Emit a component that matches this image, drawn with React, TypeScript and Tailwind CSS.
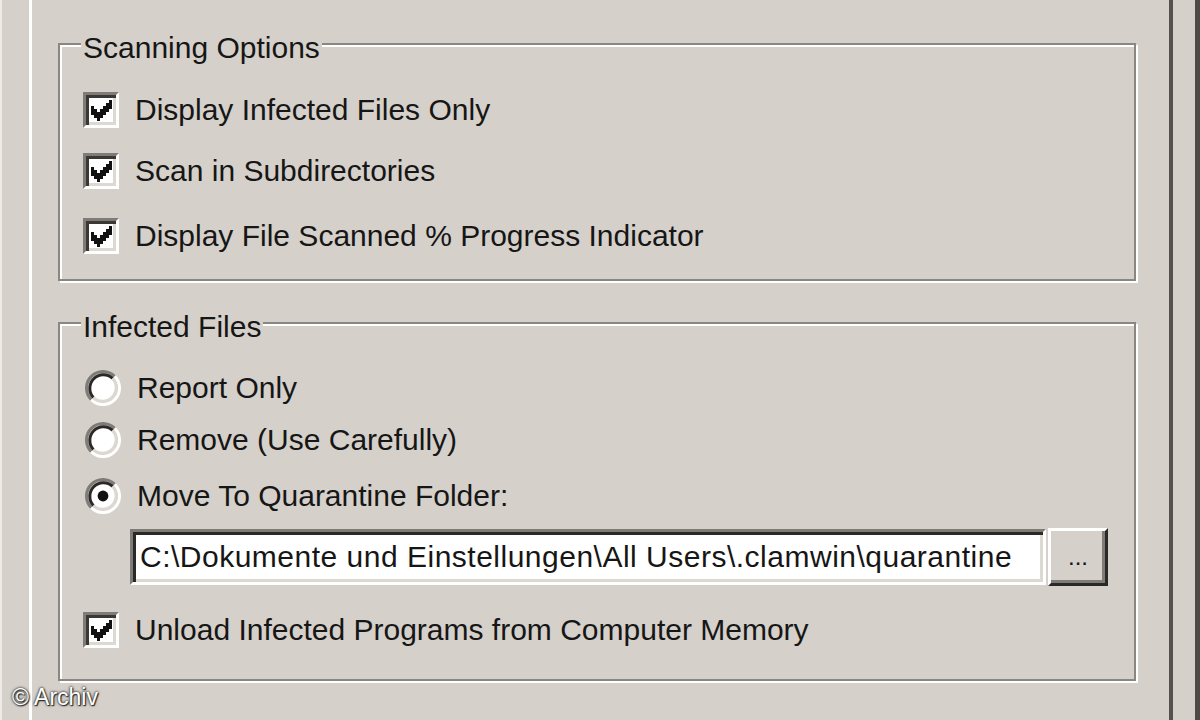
const checkRuns = [2, 3, 4, 3, 2, 1, 0];

const CheckMark = () => (
  <svg width="21" height="21" viewBox="0 0 7 7" shapeRendering="crispEdges">
    {checkRuns.map((row, col) => (
      <rect key={col} x={col} y={row} width="1" height="3" fill="#111" />
    ))}
  </svg>
);

const Checkbox = ({ checked }: { checked?: boolean }) => (
  <div className="flex h-[36px] w-[36px] shrink-0 items-center justify-center border-[3px] border-t-[#7f7b77] border-l-[#7f7b77] border-r-white border-b-white bg-white shadow-[inset_3px_3px_0_#3a3735,inset_-3px_-3px_0_#dcd8d2]">
    {checked && <CheckMark />}
  </div>
);

const Radio = ({ checked }: { checked?: boolean }) => (
  <svg width="36" height="36" viewBox="0 0 12 12" className="shrink-0">
    <circle cx="6" cy="6" r="4.5" fill="#fff" />
    <path d="M2.11 9.89 A5.5 5.5 0 0 1 9.89 2.11" fill="none" stroke="#7f7b77" strokeWidth="1" />
    <path d="M9.89 2.11 A5.5 5.5 0 0 1 2.11 9.89" fill="none" stroke="#fff" strokeWidth="1" />
    <path d="M2.82 9.18 A4.5 4.5 0 0 1 9.18 2.82" fill="none" stroke="#2b2927" strokeWidth="1" />
    <path d="M9.18 2.82 A4.5 4.5 0 0 1 2.82 9.18" fill="none" stroke="#dcd8d2" strokeWidth="1" />
    {checked && <circle cx="6" cy="6" r="1.8" fill="#111" />}
  </svg>
);

const Label = ({ children }: { children: React.ReactNode }) => (
  <span className="text-[30px] leading-[30px] text-[#161616]">{children}</span>
);

const CheckRow = ({ label, className = "" }: { label: string; className?: string }) => (
  <div className={`flex items-center gap-[16px] ${className}`}>
    <Checkbox checked />
    <Label>{label}</Label>
  </div>
);

const RadioRow = ({
  label,
  checked,
  className = "",
}: {
  label: string;
  checked?: boolean;
  className?: string;
}) => (
  <div className={`flex items-center gap-[16px] ${className}`}>
    <Radio checked={checked} />
    <Label>{label}</Label>
  </div>
);

const GroupBox = ({
  title,
  className = "",
  children,
}: {
  title: string;
  className?: string;
  children: React.ReactNode;
}) => (
  <div
    className={`relative w-[1078px] border-2 border-[#8a8682] shadow-[inset_2px_2px_0_#fff,2px_2px_0_#fff] ${className}`}
  >
    <span className="absolute left-[21px] top-[-12px] bg-[#d5d0ca] px-[2px] text-[30px] leading-[30px] text-[#161616]">
      {title}
    </span>
    {children}
  </div>
);

export default function App() {
  return (
    <div
      className="relative flex h-[720px] w-[1200px] overflow-hidden bg-[#d5d0ca]"
      style={{ fontFamily: '"Liberation Sans", Arial, sans-serif' }}
    >
      <div className="w-[29px] shrink-0 border-l-2 border-[#eeebe6]" />

      <div className="w-[1144px] shrink-0 border-l-[3px] border-r-[4px] border-l-white border-r-[#56514e] pl-[26px] pt-[43px]">
        <GroupBox title="Scanning Options" className="h-[238px] pl-[23px] pt-[47px]">
          <CheckRow label="Display Infected Files Only" />
          <CheckRow label="Scan in Subdirectories" className="mt-[25px]" />
          <CheckRow label="Display File Scanned % Progress Indicator" className="mt-[29px]" />
        </GroupBox>

        <GroupBox title="Infected Files" className="mt-[41px] h-[359px] pl-[25px] pt-[46px]">
          <RadioRow label="Report Only" />
          <RadioRow label="Remove (Use Carefully)" className="mt-[16px]" />
          <RadioRow label="Move To Quarantine Folder:" checked className="mt-[20px]" />

          <div className="ml-[45px] mt-[14px] flex items-center gap-[2px]">
            <div className="h-[56px] w-[916px] border-[3px] border-t-[#7f7b77] border-l-[#7f7b77] border-r-white border-b-white bg-white pl-[7px] pt-[10px] shadow-[inset_3px_3px_0_#2b2927,inset_-3px_-3px_0_#dcd8d2]">
              <span className="whitespace-nowrap text-[30px] leading-[30px] tracking-[0.5px] text-[#161616]">
                C:\Dokumente und Einstellungen\All Users\.clamwin\quarantine
              </span>
            </div>
            <div className="flex h-[58px] w-[60px] items-center justify-center border-[3px] border-t-white border-l-white border-r-[#2b2927] border-b-[#2b2927] bg-[#d5d0ca] shadow-[inset_-3px_-3px_0_#7f7b77]">
              <span className="text-[24px] leading-[24px] text-[#161616]">...</span>
            </div>
          </div>

          <CheckRow label="Unload Infected Programs from Computer Memory" className="-ml-[2px] mt-[26px]" />
        </GroupBox>
      </div>

      <div className="w-[27px] shrink-0 border-r-[5px] border-[#4e4a48]" />

      <span className="absolute bottom-[11px] left-[12px] text-[23px] leading-[23px] text-white [text-shadow:0_0_2px_#333,0_0_3px_#333,1px_1px_1px_#222]">
        © Archiv
      </span>
    </div>
  );
}
